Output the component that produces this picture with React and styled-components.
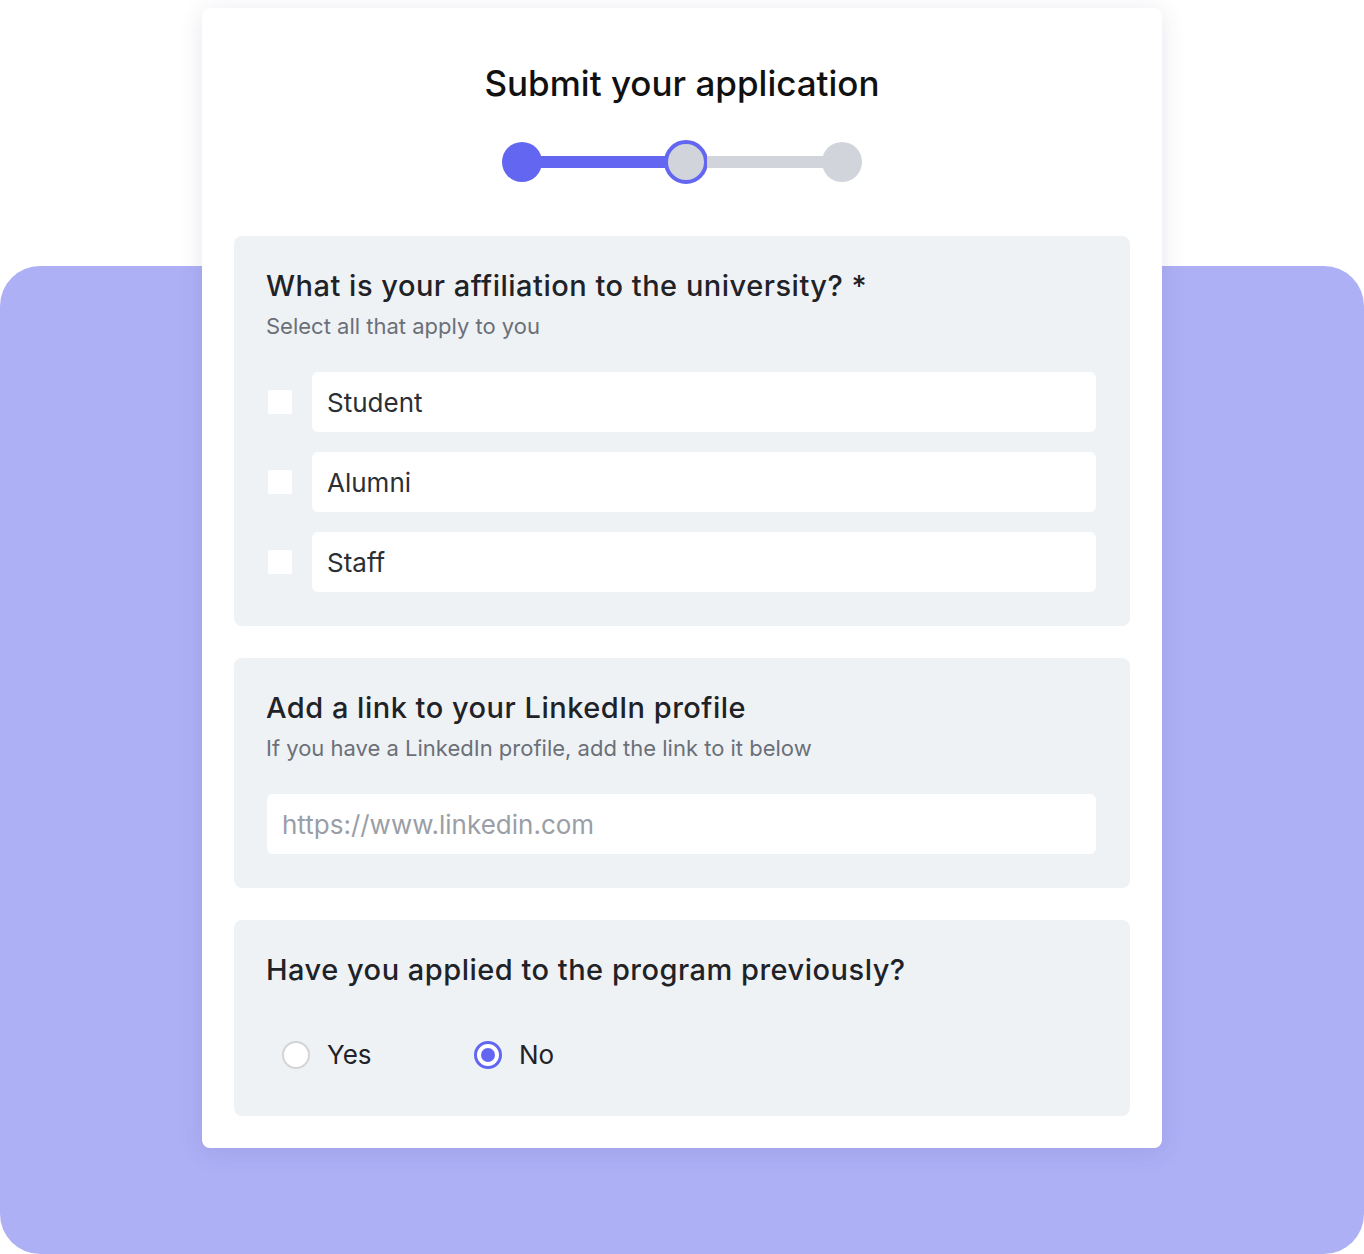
import React, { useState } from 'react'
import styled, { createGlobalStyle } from 'styled-components'

const Global = createGlobalStyle`
  html, body { margin: 0; padding: 0; background: #fff; }
  body { font-family: Inter, "Noto Sans", sans-serif; -webkit-font-smoothing: antialiased; }
  * { box-sizing: border-box; }
`

const Stage = styled.div`
  display: grid;
  width: 1364px;
  height: 1254px;
  overflow: hidden;
`

const Backdrop = styled.div`
  grid-area: 1 / 1;
  margin-top: 266px;
  height: 988px;
  background: #aeb0f6;
  border-radius: 40px;
`

const Card = styled.div`
  grid-area: 1 / 1;
  justify-self: center;
  align-self: start;
  margin-top: 8px;
  width: 960px;
  background: #fff;
  border-radius: 8px;
  box-shadow: 0 4px 24px rgba(60, 60, 120, 0.12);
  padding: 53px 32px 32px;
  display: flex;
  flex-direction: column;
  z-index: 1;
`

const Title = styled.h1`
  margin: 0;
  text-align: center;
  font-size: 35px;
  font-weight: 500;
  line-height: 44px;
  color: #111;
`

const Stepper = styled.div`
  display: flex;
  align-items: center;
  justify-content: center;
  margin: 35px 0 52px;
`

const Dot = styled.span`
  width: ${p => (p.current ? 44 : 40)}px;
  height: ${p => (p.current ? 44 : 40)}px;
  border-radius: 50%;
  background: ${p => (p.done ? '#6366f1' : '#d1d5db')};
  border: ${p => (p.current ? '4px solid #6366f1' : 'none')};
  flex: none;
`

const Line = styled.span`
  width: ${p => p.w}px;
  height: 12px;
  background: ${p => (p.done ? '#6366f1' : '#d1d5db')};
  margin: 0 -1px;
`

const Sections = styled.div`
  display: flex;
  flex-direction: column;
  gap: 32px;
`

const Section = styled.section`
  background: #eff2f5;
  border-radius: 8px;
  padding: ${p => p.pad || '32px 34px 34px 32px'};
`

const Question = styled.h2`
  margin: 0;
  font-size: 29px;
  font-weight: 500;
  letter-spacing: 0.5px;
  line-height: 36px;
  color: #1f2328;
`

const Hint = styled.p`
  margin: 7px 0 0;
  font-size: 22px;
  line-height: 30px;
  color: #6b7078;
`

const Options = styled.div`
  display: flex;
  flex-direction: column;
  gap: 20px;
  margin-top: 31px;
`

const OptionRow = styled.label`
  display: flex;
  align-items: center;
  gap: 20px;
  padding-left: 2px;
`

const Box = styled.span`
  width: 24px;
  height: 24px;
  background: #fff;
  border-radius: 2px;
  flex: none;
`

const OptionField = styled.span`
  flex: 1;
  height: 60px;
  background: #fff;
  border-radius: 6px;
  display: flex;
  align-items: center;
  padding-left: 15px;
  font-size: 26px;
  color: #2b2f36;
`

const Input = styled.input`
  display: block;
  width: calc(100% - 1px);
  margin: 31px 0 0 1px;
  height: 60px;
  border: none;
  outline: none;
  background: #fff;
  border-radius: 6px;
  padding: 0 15px;
  font-family: inherit;
  font-size: 26px;
  color: #2b2f36;
  &::placeholder { color: #9a9ea6; }
`

const Radios = styled.div`
  display: flex;
  margin-top: 51px;
  padding-left: 16px;
`

const RadioItem = styled.label`
  display: flex;
  align-items: center;
  gap: 17px;
  width: 192px;
  font-size: 26px;
  color: #1f2328;
`

const RadioCircle = styled.span`
  width: 28px;
  height: 28px;
  border-radius: 50%;
  background: #fff;
  border: ${p => (p.on ? '3px solid #6366f1' : '2px solid #d4d4d6')};
  display: flex;
  align-items: center;
  justify-content: center;
  flex: none;
  &::after {
    content: '';
    display: ${p => (p.on ? 'block' : 'none')};
    width: 14px;
    height: 14px;
    border-radius: 50%;
    background: #6366f1;
  }
`

export default function App() {
  const [choice, setChoice] = useState('No')
  const options = ['Student', 'Alumni', 'Staff']

  return (
    <>
      <Global />
      <Stage>
        <Backdrop />
        <Card>
          <Title>Submit your application</Title>
          <Stepper>
            <Dot done />
            <Line done w={124} />
            <Dot current />
            <Line w={116} />
            <Dot />
          </Stepper>
          <Sections>
            <Section>
              <Question>What is your affiliation to the university? *</Question>
              <Hint>Select all that apply to you</Hint>
              <Options>
                {options.map(o => (
                  <OptionRow key={o}>
                    <Box />
                    <OptionField>{o}</OptionField>
                  </OptionRow>
                ))}
              </Options>
            </Section>
            <Section>
              <Question>Add a link to your LinkedIn profile</Question>
              <Hint>If you have a LinkedIn profile, add the link to it below</Hint>
              <Input placeholder="https://www.linkedin.com" />
            </Section>
            <Section pad="32px 34px 46px 32px">
              <Question>Have you applied to the program previously?</Question>
              <Radios>
                {['Yes', 'No'].map(v => (
                  <RadioItem key={v} onClick={() => setChoice(v)}>
                    <RadioCircle on={choice === v} />
                    {v}
                  </RadioItem>
                ))}
              </Radios>
            </Section>
          </Sections>
        </Card>
      </Stage>
    </>
  )
}
